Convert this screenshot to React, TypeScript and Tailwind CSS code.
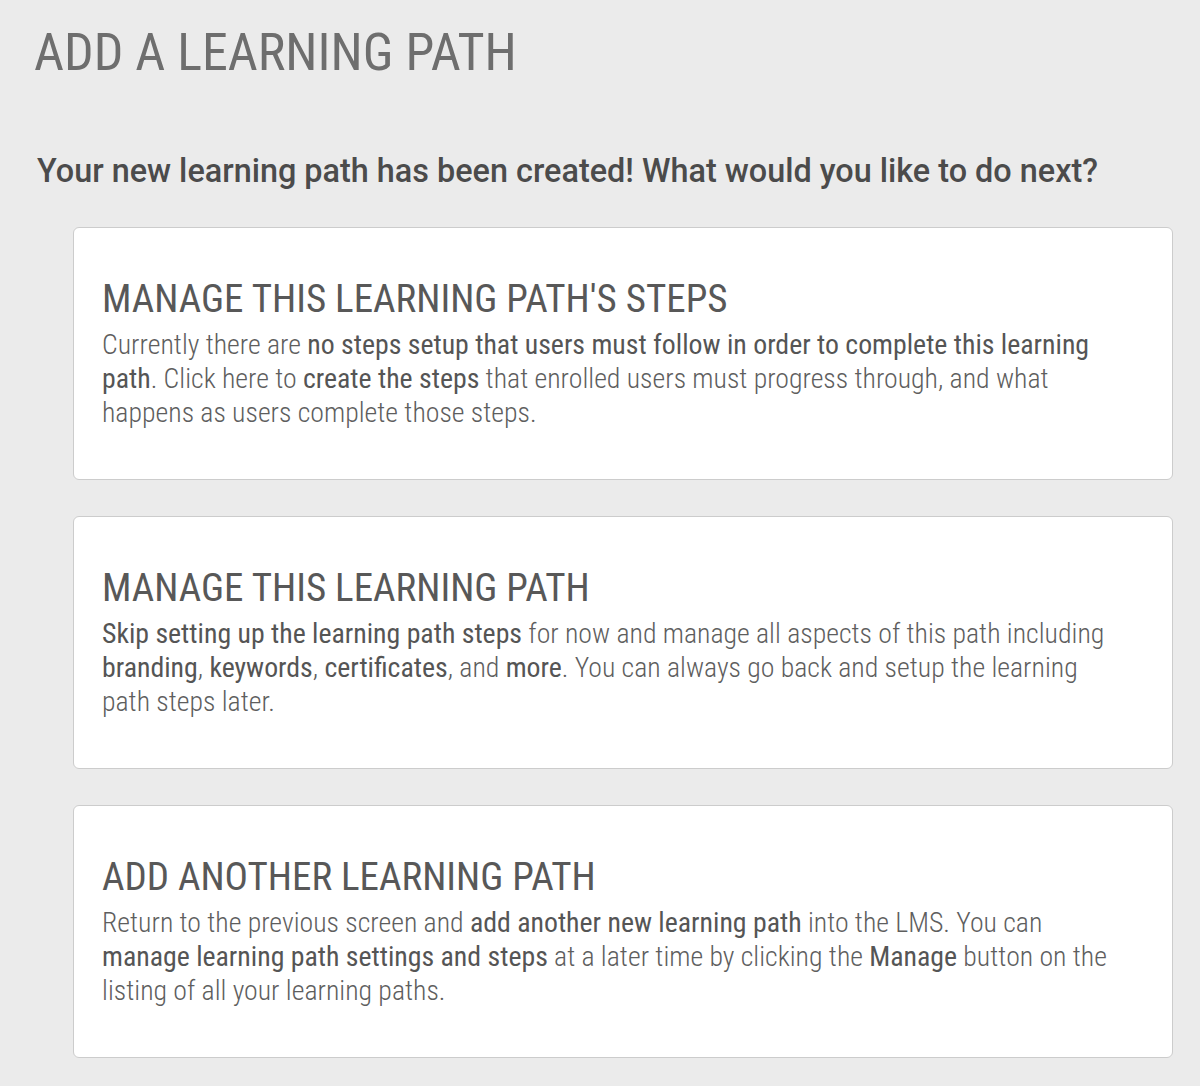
import React from 'react';

type Option = {
  title: string;
  body: React.ReactNode;
};

const B = ({ children }: { children: React.ReactNode }) => (
  <span className="font-normal text-[#555555]">{children}</span>
);

const options: Option[] = [
  {
    title: "MANAGE THIS LEARNING PATH'S STEPS",
    body: (
      <>
        Currently there are <B>no steps setup that users must follow in order to complete this learning path</B>. Click
        here to <B>create the steps</B> that enrolled users must progress through, and what happens as users complete
        those steps.
      </>
    ),
  },
  {
    title: 'MANAGE THIS LEARNING PATH',
    body: (
      <>
        <B>Skip setting up the learning path steps</B> for now and manage all aspects of this path including{' '}
        <B>branding</B>, <B>keywords</B>, <B>certificates</B>, and <B>more</B>. You can always go back and setup the
        learning path steps later.
      </>
    ),
  },
  {
    title: 'ADD ANOTHER LEARNING PATH',
    body: (
      <>
        Return to the previous screen and <B>add another new learning path</B> into the LMS. You can{' '}
        <B>manage learning path settings and steps</B> at a later time by clicking the <B>Manage</B> button on the
        listing of all your learning paths.
      </>
    ),
  },
];

const OptionCard = ({ title, body }: Option) => (
  <div className="cursor-pointer rounded-[6px] border border-[#cccccc] bg-white pt-[52px] pb-[49px] pl-[28px] pr-[50px]">
    <h3 className="font-['Roboto_Condensed',Roboto,sans-serif] text-[39px] font-normal leading-none text-[#585858]">
      {title}
    </h3>
    <p className="mt-[9px] font-['Roboto_Condensed',Roboto,sans-serif] text-[27.8px] font-light leading-[34px] text-[#5e5e5e]">
      {body}
    </p>
  </div>
);

export default function App() {
  return (
    <div className="min-h-[1086px] bg-[#ebebeb] pl-[34px] pt-[27px]">
      <h1 className="font-['Roboto_Condensed',Roboto,sans-serif] text-[52px] font-normal leading-none text-[#6e6e6e]">
        ADD A LEARNING PATH
      </h1>
      <h2 className="mt-[76px] pl-[3px] font-['Roboto',sans-serif] text-[32.4px] font-medium leading-none text-[#4b4b4b]">
        Your new learning path has been created! What would you like to do next?
      </h2>
      <div className="ml-[39px] mt-[40px] flex w-[1100px] flex-col gap-[36px]">
        {options.map((o) => (
          <OptionCard key={o.title} {...o} />
        ))}
      </div>
    </div>
  );
}
